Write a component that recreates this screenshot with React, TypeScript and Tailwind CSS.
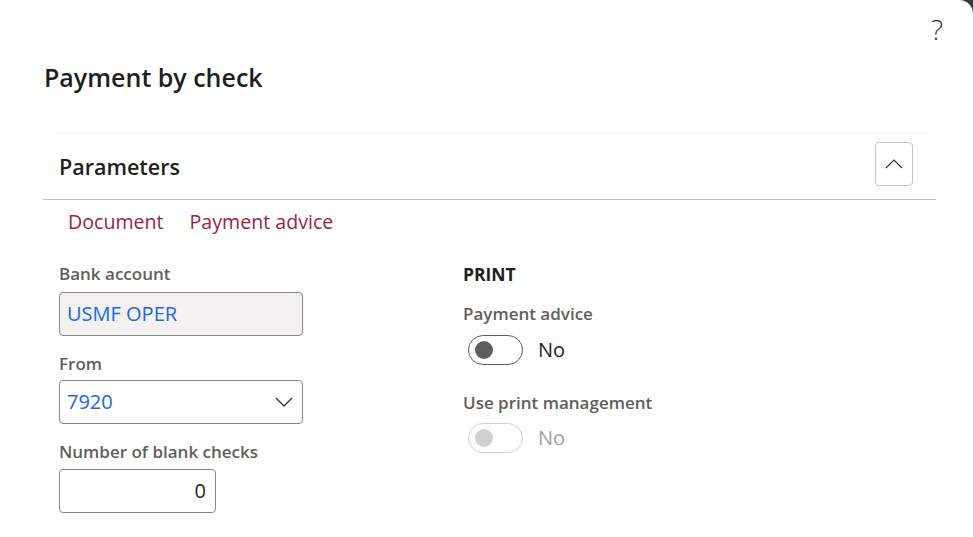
import React from 'react';

const font = { fontFamily: '"Open Sans", "Noto Sans", sans-serif' };

type ToggleProps = { disabled?: boolean };

const Toggle: React.FC<ToggleProps> = ({ disabled }) => (
  <div className="flex items-center gap-[15px] pl-[5px]">
    <div
      className={`flex h-[30px] w-[55px] items-center rounded-full border px-[6px] ${
        disabled ? 'border-[#d2d0ce]' : 'border-[#605e5c]'
      }`}
    >
      <div className={`h-[18px] w-[18px] rounded-full ${disabled ? 'bg-[#d2d0ce]' : 'bg-[#605e5c]'}`} />
    </div>
    <span className={`text-[20px] ${disabled ? 'text-[#a19f9d]' : 'text-[#201f1e]'}`}>No</span>
  </div>
);

const Label: React.FC<{ children: React.ReactNode }> = ({ children }) => (
  <div className="text-[17px] font-semibold leading-[22px] text-[#605e5c]">{children}</div>
);

export default function App() {
  return (
    <div className="h-[537px] w-[973px] overflow-hidden bg-[#3b3a39]" style={font}>
      <div className="h-full w-full rounded-tr-[14px] bg-white">
        <div className="flex justify-end pr-[30px] pt-[12px]">
          <span className="text-[28px] font-light leading-[34px] text-[#323130]">?</span>
        </div>
        <h1 className="pl-[44px] pt-[15px] text-[25px] font-semibold leading-[32px] text-[#201f1e]">
          Payment by check
        </h1>

        <div className="ml-[56px] mr-[45px] mt-[39px] border-t border-[#f3f2f1]" />
        <div className="ml-[43px] mr-[37px] border-b border-[#bdbdbd]">
          <div className="flex items-center justify-between pl-[16px] pr-[23px] pt-[9px] pb-[13px]">
            <span className="pt-[6px] text-[21.5px] font-semibold leading-[28px] text-[#201f1e]">Parameters</span>
            <button className="flex h-[44px] w-[38px] items-center justify-center rounded-[4px] border border-[#c8c6c4] bg-white">
              <svg width="18" height="10" viewBox="0 0 18 10" fill="none">
                <path d="M1 9 L9 1 L17 9" stroke="#323130" strokeWidth="1.2" />
              </svg>
            </button>
          </div>
        </div>

        <div className="flex gap-[26px] pl-[68px] pt-[8px] text-[19.6px] leading-[28px] text-[#9c1e4a]">
          <span>Document</span>
          <span>Payment advice</span>
        </div>

        <div className="flex pl-[59px] pt-[27px]">
          <div className="w-[404px]">
            <Label>Bank account</Label>
            <div className="mt-[7px] flex h-[44px] w-[244px] items-center rounded-[4px] border border-[#8a8886] bg-[#f3f2f1] px-[7px] text-[20px] text-[#2266e3]">
              USMF OPER
            </div>
            <div className="mt-[17px]">
              <Label>From</Label>
            </div>
            <div className="mt-[5px] flex h-[44px] w-[244px] items-center justify-between rounded-[4px] border border-[#8a8886] bg-white pl-[7px] pr-[9px] text-[20px] text-[#2266e3]">
              <span>7920</span>
              <svg width="18" height="10" viewBox="0 0 18 10" fill="none">
                <path d="M1 1 L9 9 L17 1" stroke="#323130" strokeWidth="1.3" />
              </svg>
            </div>
            <div className="mt-[17px]">
              <Label>Number of blank checks</Label>
            </div>
            <div className="mt-[6px] flex h-[44px] w-[157px] items-center justify-end rounded-[4px] border border-[#8a8886] bg-white px-[9px] text-[20px] text-[#201f1e]">
              0
            </div>
          </div>

          <div>
            <div className="text-[17.5px] font-bold leading-[22px] text-[#201f1e]">PRINT</div>
            <div className="mt-[18px]">
              <Label>Payment advice</Label>
            </div>
            <div className="mt-[10px]">
              <Toggle />
            </div>
            <div className="mt-[27px]">
              <Label>Use print management</Label>
            </div>
            <div className="mt-[9px]">
              <Toggle disabled />
            </div>
          </div>
        </div>
      </div>
    </div>
  );
}
